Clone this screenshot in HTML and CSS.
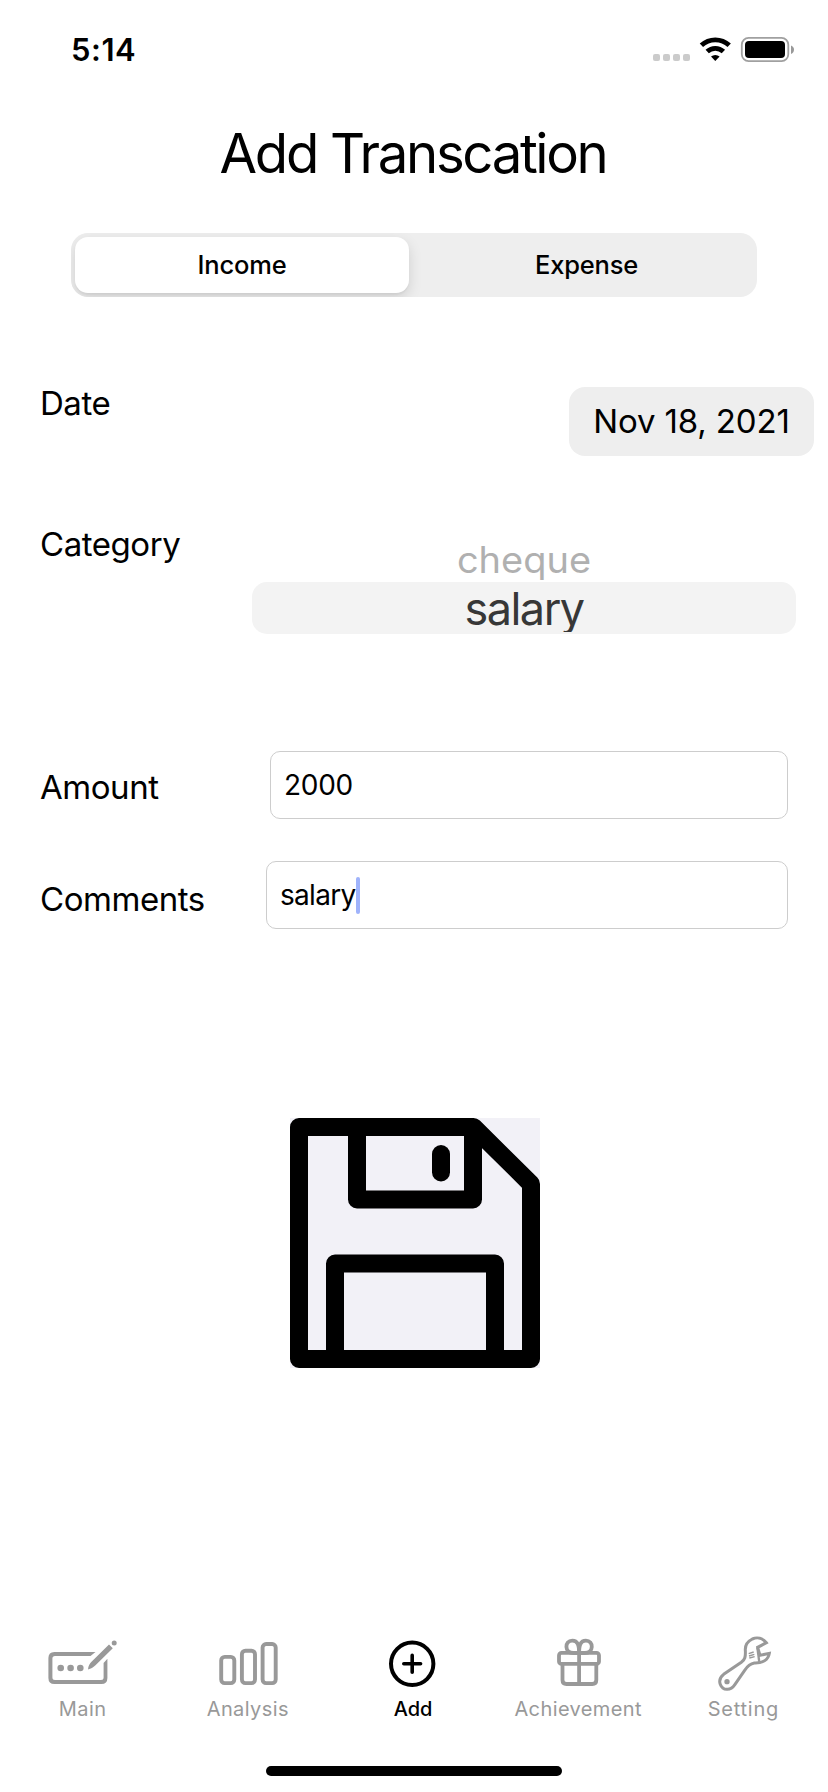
FILE: index.html
```html
<!DOCTYPE html>
<html lang="en">
<head>
<meta charset="utf-8">
<title>Add Transcation</title>
<link rel="stylesheet" href="styles.css">
</head>
<body>
<div class="screen">
  <header class="status">
    <span class="time">5:14</span>
    <svg class="status-icons" width="144" height="40" viewBox="0 0 144 40">
      <g fill="#cbcbcb"><rect x="1" y="24" width="7" height="7" rx="2"/><rect x="11" y="24" width="7" height="7" rx="2"/><rect x="21" y="24" width="7" height="7" rx="2"/><rect x="31" y="24" width="7" height="7" rx="2"/></g>
      <g fill="none" stroke="#000" stroke-width="4.9"><path d="M49.4 15.3a20.5 20.5 0 0 1 27.8 0"/><path d="M55.2 21.5a12 12 0 0 1 16.2 0"/></g>
      <path d="M63.3 31l-4.3-4.4a6.3 6.3 0 0 1 8.6 0z"/>
      <rect x="89.8" y="7.9" width="46.5" height="23.2" rx="6.8" fill="none" stroke="#a0a0a0" stroke-width="1.8"/>
      <rect x="93" y="11" width="40" height="17" rx="4"/>
      <path d="M139 15.5c4 1.2 4 7.2 0 8.4z" fill="#999"/>
    </svg>
  </header>
  <h1 class="title">Add Transcation</h1>
  <div class="segments">
    <div class="segment selected">Income</div>
    <div class="segment">Expense</div>
  </div>
  <main class="form">
    <div class="row row-date">
      <span class="label">Date</span>
      <div class="date-pill">Nov 18, 2021</div>
    </div>
    <div class="row row-category">
      <span class="label category">Category</span>
      <div class="picker">
        <div class="option faded"><span>cheque</span></div>
        <div class="option current"><span>salary</span></div>
      </div>
    </div>
    <div class="row row-amount">
      <span class="label amount">Amount</span>
      <div class="field field-amount">2000</div>
    </div>
    <div class="row row-comments">
      <span class="label comments">Comments</span>
      <div class="field field-comments">salary<i class="caret"></i></div>
    </div>
  </main>
  <div class="save">
    <svg width="250" height="250" viewBox="0 0 250 250">
      <rect width="250" height="250" fill="#f2f1f7"/>
      <g fill="none" stroke="#000" stroke-width="18" stroke-linejoin="round">
        <path d="M9 9H183.500L241 66V241H9Z"/>
        <path d="M67 9V81.500H183V9"/>
        <path d="M45 241V145.500H205V241"/>
        <path d="M151 36V54.500" stroke-linecap="round"/>
      </g>
    </svg>
  </div>
  <nav class="tabs">
    <div class="tab tab-main">
      <svg width="72" height="60" viewBox="0 0 72 60">
        <path d="M48.500 16L43.500 20H8Q5.400 20 5.400 22.600V41.500Q5.400 44 8 44H54Q56.600 44 56.600 41.500V27L60.400 22.800V42Q60.400 48 54.400 48H7.400Q1.400 48 1.400 42V22Q1.400 16 7.400 16Z"/>
        <circle cx="13.700" cy="32" r="3.300"/><circle cx="23.600" cy="32" r="3.300"/><circle cx="33.300" cy="32" r="3.300"/>
        <path d="M41 33.500C41.300 30 42.500 27.700 45 25.300L62 8.500L65.800 12.200L48.500 29.200C46 31.400 44 32.700 41 33.500Z"/>
        <circle cx="67.200" cy="7" r="2.500"/>
      </svg>
      <span>Main</span>
    </div>
    <div class="tab tab-analysis">
      <svg width="72" height="60" viewBox="0 0 72 60">
        <g fill="none" stroke="#999" stroke-width="3.900"><rect x="9.200" y="20.900" width="13.100" height="26.200" rx="3.500"/><rect x="29.900" y="14.700" width="13.100" height="32.400" rx="3.500"/><rect x="50.600" y="8" width="13.100" height="39.100" rx="3.500"/></g>
      </svg>
      <span>Analysis</span>
    </div>
    <div class="tab tab-add">
      <svg width="72" height="60" viewBox="0 0 72 60">
        <g fill="none" stroke="#000" stroke-width="4" stroke-linecap="round"><circle cx="35.200" cy="27.800" r="21.200"/><path d="M26.800 27.800h16.800M35.200 19.400v16.800" stroke-width="3.600"/></g>
      </svg>
      <span>Add</span>
    </div>
    <div class="tab tab-achievement">
      <svg width="72" height="60" viewBox="0 0 72 60">
        <g fill="none" stroke="#999" stroke-width="3.800"><rect x="17" y="16.900" width="40" height="11" rx="2.500"/><path d="M20.500 28V44Q20.500 48 24.500 48H50.300Q54.300 48 54.300 44V28"/><path d="M37.100 17V48"/><path d="M37.100 17H31.300C22.300 17 22.300 4.600 30.300 4.600C35.800 4.600 37.100 9 37.100 17Z"/><path d="M37.100 17H42.900C51.900 17 51.900 4.600 43.900 4.600C38.400 4.600 37.100 9 37.100 17Z"/></g>
      </svg>
      <span>Achievement</span>
    </div>
    <div class="tab tab-setting">
      <svg width="72" height="60" viewBox="202 48 216 180">
        <g fill="none" stroke="#999" stroke-width="9" stroke-linejoin="miter"><path d="M380 68C369 54 352 51 338 57C322 65 316 77 317 91C318 110 316 119 305 127L252 163C229 181 244 209 263 208C273 208 280 202 286 193L315 151C323 139 333 131 344 129C368 130 386 120 389 100L361 106L354 82Z"/><path d="M353 83L359 127" stroke-width="7"/><path d="M327 101L342 96M328 108L344 103M329 114L345 110" stroke-width="4"/></g>
        <circle cx="262" cy="185" r="8"/>
      </svg>
      <span>Setting</span>
    </div>
  </nav>
  <div class="home"></div>
</div>
</body>
</html>
```
FILE: styles.css
```css
* { box-sizing: border-box; }
body { margin: 0; background: #fff; }
.screen {
  width: 828px; height: 1792px; overflow: hidden;
  display: flex; flex-direction: column;
  background: #fff; color: #000;
  font-family: Inter, "Liberation Sans", sans-serif;
}
.status { height: 100px; display: flex; justify-content: space-between; padding: 30px 32px 0 71px; }
.time { font-size: 31px; font-weight: 600; line-height: 40px; letter-spacing: 0.5px; }
.status-icons { display: block; }
.title { margin: 0; height: 106px; line-height: 107px; text-align: center; font-size: 54.5px; font-weight: 400; letter-spacing: -2.35px; text-indent: -2px; }
.segments {
  display: flex; margin: 27px 71px 0; height: 64px; padding: 4px;
  border-radius: 17px; background: #eee; overflow: hidden;
}
.segment { flex: 1; padding-left: 11px; line-height: 56px; text-align: center; font-size: 25.5px; font-weight: 500; letter-spacing: -0.2px; }
.segment.selected { flex: 0 0 334px; padding-left: 0; background: #fff; border-radius: 13px; box-shadow: 0 5px 14px rgba(0,0,0,.13), 0 2px 2px rgba(0,0,0,.04); }
.form { display: flex; flex-direction: column; }
.row { display: flex; justify-content: space-between; align-items: flex-start; padding-left: 40px; }
.label { font-size: 33px; line-height: 46px; letter-spacing: -0.45px; white-space: nowrap; }
.row-date { margin-top: 83px; padding-right: 14px; }
.row-date .label { margin-top: 0; }
.date-pill { margin-top: 7px; width: 245px; height: 69px; line-height: 69px; border-radius: 16px; background: #eee; text-align: center; font-size: 33px; letter-spacing: -0.15px; white-space: nowrap; }
.row-category { margin-top: 65px; padding-right: 32px; }
.picker { width: 544px; height: 113px; padding-top: 18px; color: #373737; text-align: center; }
.option span { display: inline-block; }
.faded { height: 43px; line-height: 42px; font-size: 38px; color: #b0b0b0; }
.faded span { transform: scaleY(.95); }
.current { height: 52px; line-height: 53px; font-size: 45px; letter-spacing: -1.5px; border-radius: 15px; background: #f3f3f3; }
.current span { clip-path: inset(0 -4px 3px -4px); }
.row-amount { margin-top: 117px; padding-right: 40px; }
.row-amount .label { margin-top: 13px; }
.row-comments { margin-top: 42px; padding-right: 40px; }
.row-comments .label { margin-top: 15px; }
.field { display: flex; align-items: center; height: 68px; border: 1px solid #cdcdcd; border-radius: 10px; font-size: 28px; letter-spacing: -0.3px; padding-left: 13px; }
.field-amount { width: 518px; }
.field-comments { width: 522px; letter-spacing: -0.7px; }
.caret { width: 4px; height: 37px; border-radius: 2px; background: #9fb3fb; }
.save { margin-top: 189px; height: 250px; padding-left: 290px; }
.save svg { display: block; }
.tabs { display: flex; margin-top: 268px; padding-right: 2px; height: 130px; color: #999; fill: #999; }
.tab { flex: 1; display: flex; flex-direction: column; align-items: center; font-size: 20px; line-height: 26px; letter-spacing: 0.4px; }
.tab svg { display: block; }
.tab-add { color: #000; font-weight: 500; letter-spacing: 0; }
.tab-setting span { letter-spacing: 0.75px; }
.home { width: 296px; height: 10px; margin-left: 266px; border-radius: 5px; background: #000; }
```
